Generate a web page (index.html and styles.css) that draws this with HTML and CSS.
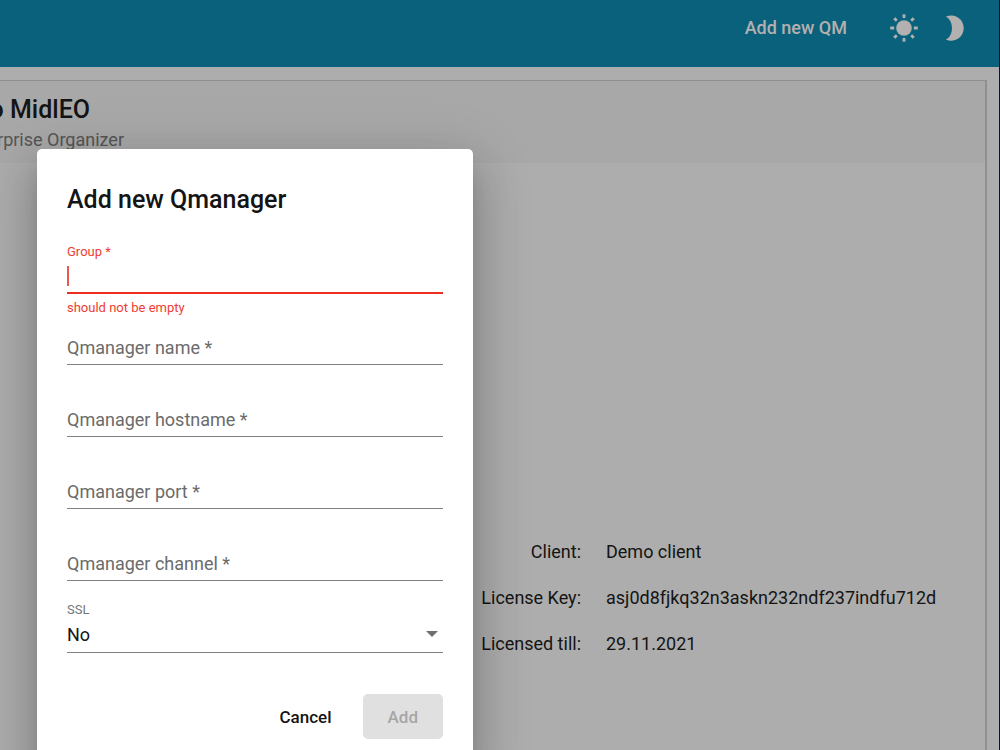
FILE: index.html
```
<!DOCTYPE html>
<html lang="en">
<head>
<meta charset="utf-8">
<meta name="viewport" content="width=device-width, initial-scale=1">
<title>MidlEO</title>
<link rel="stylesheet" href="styles.css">
</head>
<body>
<div class="app">
  <header class="topbar">
    <button class="topbar-action" type="button">Add new QM</button>
    <button class="icon-button" type="button" aria-label="Light theme">
      <svg viewBox="0 0 28 28" width="28" height="28">
        <circle cx="14" cy="14" r="7.8" fill="currentColor"/>
        <path d="M14 .2v3.700M14 24.100v3.700M.2 14h4M23.800 14h4M4.200 4.200l2.600 2.600M21.200 21.200l2.600 2.600M4.200 23.800l2.600-2.600M21.200 6.800l2.600-2.600" stroke="currentColor" stroke-width="2.800"/>
      </svg>
    </button>
    <button class="icon-button" type="button" aria-label="Dark theme">
      <svg viewBox="0 0 28 28" width="28" height="28">
        <path d="M4.800 2.800A12.600 12.600 0 1 1 4.800 25.600C13 22 13 6.400 4.800 2.800Z" fill="currentColor"/>
      </svg>
    </button>
  </header>
  <main class="content">
    <section class="card">
      <div class="card-header">
        <h1 class="card-title">Welcome to MidlEO</h1>
        <p class="card-subtitle">Middleware Enterprise Organizer</p>
      </div>
      <dl class="license">
        <dt>Client:</dt><dd>Demo client</dd>
        <dt>License Key:</dt><dd>asj0d8fjkq32n3askn232ndf237indfu712d</dd>
        <dt>Licensed till:</dt><dd>29.11.2021</dd>
      </dl>
    </section>
  </main>
</div>

<div class="dialog" role="dialog" aria-modal="true" aria-labelledby="dialog-title">
  <h2 class="dialog-title" id="dialog-title">Add new Qmanager</h2>
  <form>
    <div class="field field-error">
      <label class="float-label" for="group">Group *</label>
      <div class="control">
        <input class="input" id="group" type="text" aria-describedby="group-error" aria-invalid="true">
        <span class="caret"></span>
      </div>
      <p class="hint" id="group-error">should not be empty</p>
    </div>
    <div class="field">
      <div class="control"><label class="label" for="name">Qmanager name *</label><input class="input" id="name" type="text"></div>
    </div>
    <div class="field">
      <div class="control"><label class="label" for="host">Qmanager hostname *</label><input class="input" id="host" type="text"></div>
    </div>
    <div class="field">
      <div class="control"><label class="label" for="port">Qmanager port *</label><input class="input" id="port" type="text"></div>
    </div>
    <div class="field">
      <div class="control"><label class="label" for="channel">Qmanager channel *</label><input class="input" id="channel" type="text"></div>
    </div>
    <div class="field field-select">
      <label class="float-label" for="ssl">SSL</label>
      <div class="control">
        <select class="input" id="ssl"><option>No</option><option>Yes</option></select>
        <svg class="arrow" viewBox="0 0 12 6" width="12" height="6"><path d="M0 0h12L6 6z" fill="currentColor"/></svg>
      </div>
    </div>
    <div class="actions">
      <button class="button" type="button">Cancel</button>
      <button class="button button-filled" type="submit" disabled>Add</button>
    </div>
  </form>
</div>
</body>
</html>
```
FILE: styles.css
```
* { box-sizing: border-box; }
html, body { height: 100%; }
body {
  margin: 0;
  overflow: hidden;
  font-family: Roboto, "Liberation Sans", sans-serif;
  font-size: 17px;
  color: #141414;
  background: #adadad;
}
h1, h2, p, dl, dd { margin: 0; }
button, input, select { font: inherit; color: inherit; }
button { border: 0; background: none; padding: 0; }

.app {
  display: flex;
  flex-direction: column;
  min-height: 100%;
  border-right: 1px solid #10102f;
}
.topbar {
  display: flex;
  justify-content: flex-end;
  align-items: center;
  height: 67px;
  padding: 0 30px 12px 0;
  color: #b2b0b0;
  background: #0a617b;
}
.topbar-action { margin-right: 43px; font-size: 18px; font-weight: 500; }
.icon-button { display: flex; }
.icon-button + .icon-button { margin-left: 23px; }

.content { display: flex; flex: 1; padding: 13px 12px 0 0; }
.card {
  flex: 1;
  border: 2px solid #909090;
  border-width: 1px 2px 0 0;
}
.card-header { height: 82px; padding-top: 13px; background: #a8a8a8; }
.card-title, .card-subtitle {
  display: flex;
  justify-content: flex-end;
  white-space: nowrap;
}
.card-title { width: 90px; font-size: 25px; line-height: 32px; font-weight: 500; }
.card-subtitle { width: 124px; padding-top: 2px; font-size: 18px; line-height: 24px; color: #555; }
.license {
  display: grid;
  grid-template-columns: 581px 1fr;
  column-gap: 25px;
  row-gap: 22px;
  padding-top: 377px;
  font-size: 18px;
  line-height: 24px;
}
.license dt { text-align: right; }

.dialog {
  position: absolute;
  top: 149px;
  left: 37px;
  width: 436px;
  padding: 35px 30px 30px;
  border-radius: 5px;
  background: #fff;
  box-shadow: 0 13px 18px -8px rgba(0,0,0,.2), 0 28px 45px 4px rgba(0,0,0,.14), 0 11px 54px 10px rgba(0,0,0,.12);
}
.dialog-title { margin-bottom: 28px; font-size: 25px; line-height: 32px; font-weight: 500; }
.field {
  display: grid;
  grid-template-rows: 16px 34px 22px;
}
.float-label { font-size: 13px; line-height: 16px; color: #757575; }
.control {
  grid-row: 2;
  display: grid;
  align-items: center;
  height: 33px;
  border-bottom: 1px solid #808080;
}
.control > * { grid-area: 1 / 1; }
.label { font-size: 18px; line-height: 24px; color: #6b6b6b; }
.input {
  appearance: none;
  width: 100%;
  height: 32px;
  padding: 0;
  border: 0;
  outline: 0;
  background: transparent;
  font-size: 18px;
}
.caret { width: 2px; height: 20px; background: #e8594f; }
.field-error .float-label, .hint { color: #ee3d33; }
.field-error .control { height: 34px; border-bottom: 2px solid #ee2d20; }
.hint { margin-top: 6px; font-size: 13px; line-height: 16px; }
.field-select .float-label { line-height: 12px; }
.field-select .control { align-items: start; }
.field-select .input { height: 28px; }
.arrow { justify-self: end; margin: 11px 5px 0 0; color: #707070; pointer-events: none; }

.actions {
  display: flex;
  justify-content: flex-end;
  gap: 6px;
  padding-top: 18px;
}
.button { height: 45px; padding: 0 25px; border-radius: 5px; font-weight: 500; }
.button-filled { background: #e0e0e0; color: #a6a6a6; }
```
